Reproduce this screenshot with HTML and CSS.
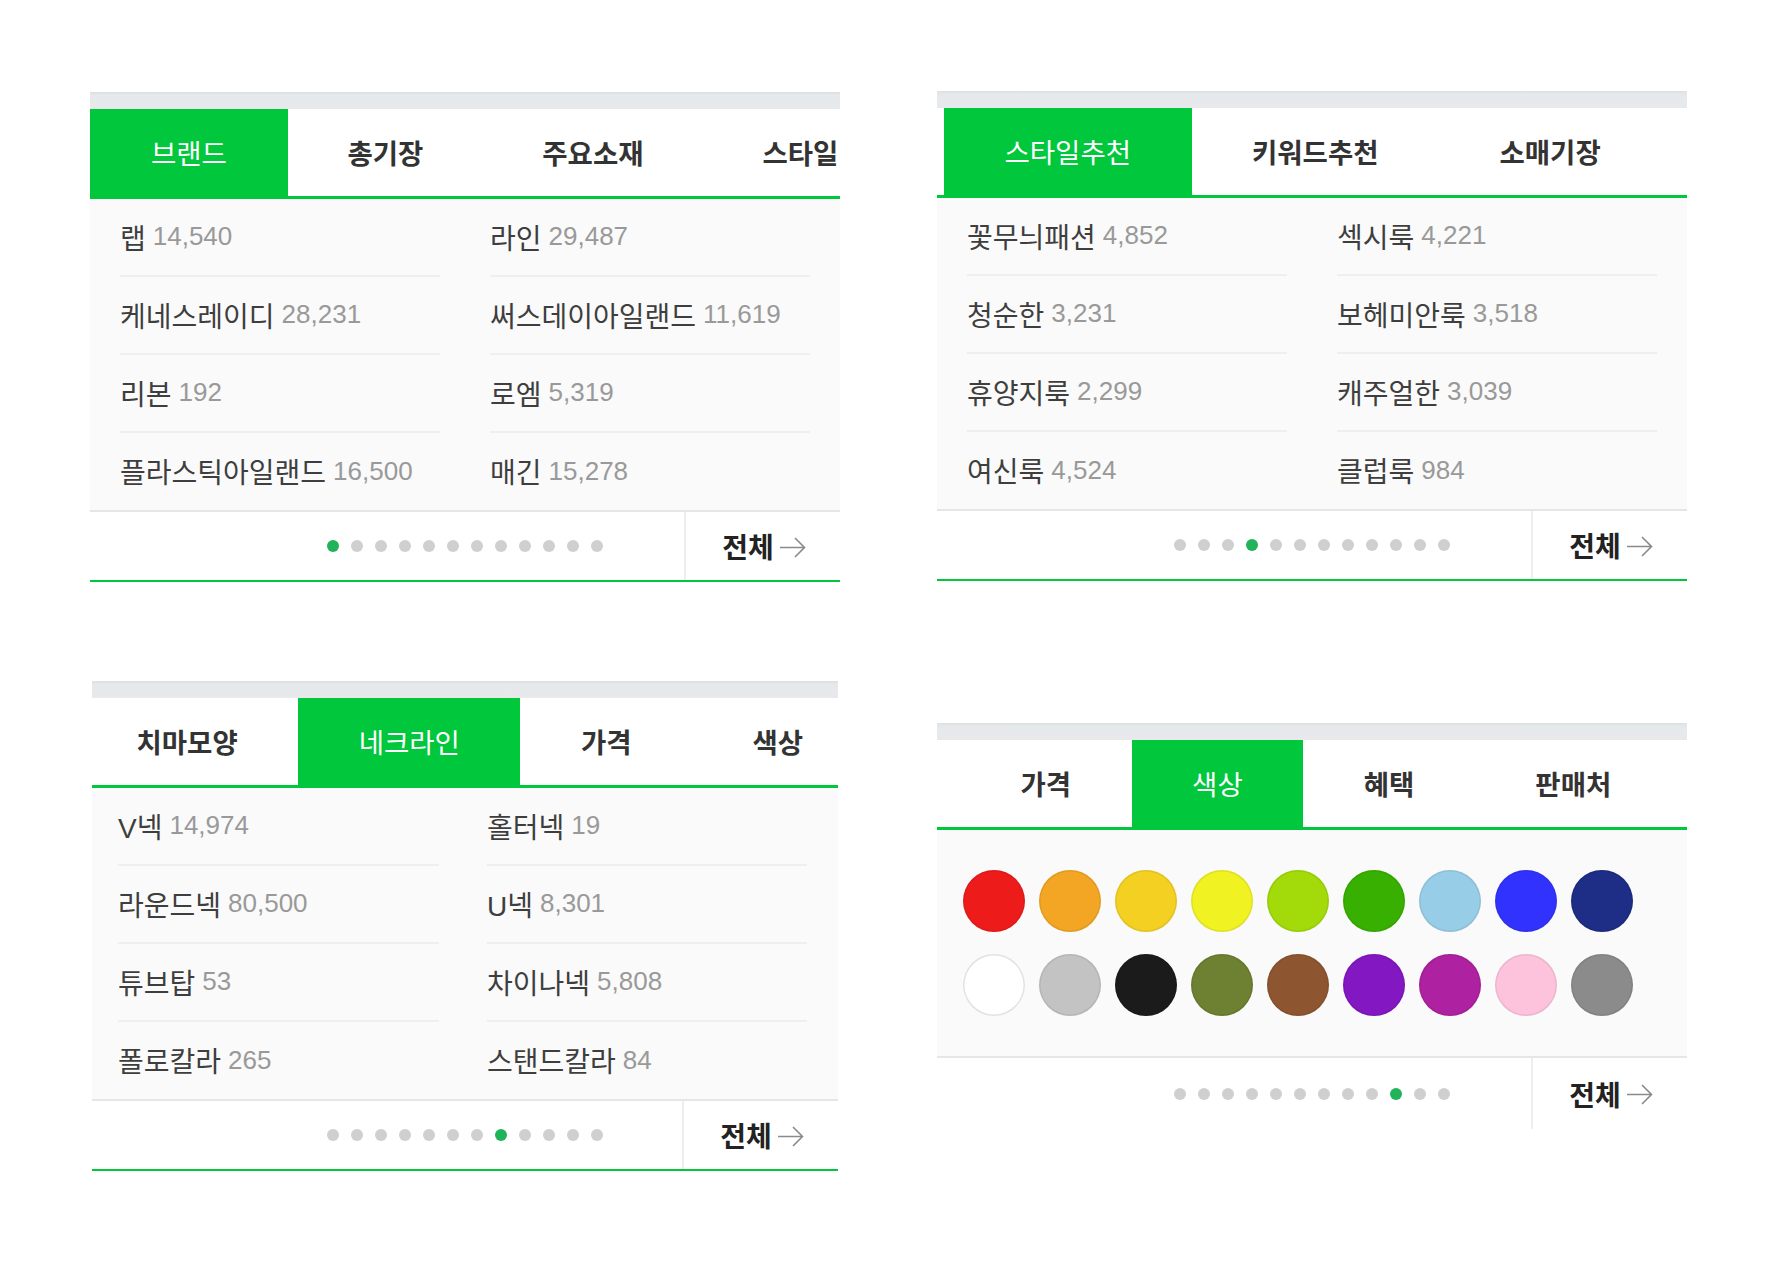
FILE: index.html
```html
<!DOCTYPE html>
<html lang="ko">
<head>
<meta charset="utf-8">
<title>Filter tabs</title>
<link rel="stylesheet" href="styles.css">
</head>
<body>
<main class="canvas">

  <section class="panel p1">
    <div class="topbar"></div>
    <nav class="tabs"><div class="track">
      <a class="tab active">브랜드</a><a class="tab">총기장</a><a class="tab">주요소재</a><a class="tab">스타일</a>
    </div></nav>
    <ul class="list">
      <li><span class="name">랩</span> <span class="num">14,540</span></li>
      <li><span class="name">라인</span> <span class="num">29,487</span></li>
      <li><span class="name">케네스레이디</span> <span class="num">28,231</span></li>
      <li><span class="name">써스데이아일랜드</span> <span class="num">11,619</span></li>
      <li><span class="name">리본</span> <span class="num">192</span></li>
      <li><span class="name">로엠</span> <span class="num">5,319</span></li>
      <li><span class="name">플라스틱아일랜드</span> <span class="num">16,500</span></li>
      <li><span class="name">매긴</span> <span class="num">15,278</span></li>
    </ul>
    <footer class="pager">
      <span class="spacer"></span>
      <div class="dots"><i class="on"></i><i></i><i></i><i></i><i></i><i></i><i></i><i></i><i></i><i></i><i></i><i></i></div>
      <a class="all">전체<svg width="27" height="21" viewBox="0 0 27 21"><path d="M1 10.5H25.5M16 1L25.5 10.5L16 20" fill="none" stroke="#8a8a8a" stroke-width="1.6"/></svg></a>
    </footer>
  </section>

  <section class="panel p2">
    <div class="topbar"></div>
    <nav class="tabs"><div class="track">
      <a class="tab active">스타일추천</a><a class="tab">키워드추천</a><a class="tab">소매기장</a>
    </div></nav>
    <ul class="list">
      <li><span class="name">꽃무늬패션</span> <span class="num">4,852</span></li>
      <li><span class="name">섹시룩</span> <span class="num">4,221</span></li>
      <li><span class="name">청순한</span> <span class="num">3,231</span></li>
      <li><span class="name">보헤미안룩</span> <span class="num">3,518</span></li>
      <li><span class="name">휴양지룩</span> <span class="num">2,299</span></li>
      <li><span class="name">캐주얼한</span> <span class="num">3,039</span></li>
      <li><span class="name">여신룩</span> <span class="num">4,524</span></li>
      <li><span class="name">클럽룩</span> <span class="num">984</span></li>
    </ul>
    <footer class="pager">
      <span class="spacer"></span>
      <div class="dots"><i></i><i></i><i></i><i class="on"></i><i></i><i></i><i></i><i></i><i></i><i></i><i></i><i></i></div>
      <a class="all">전체<svg width="27" height="21" viewBox="0 0 27 21"><path d="M1 10.5H25.5M16 1L25.5 10.5L16 20" fill="none" stroke="#8a8a8a" stroke-width="1.6"/></svg></a>
    </footer>
  </section>

  <section class="panel p3">
    <div class="topbar"></div>
    <nav class="tabs"><div class="track">
      <a class="tab">치마모양</a><a class="tab active">네크라인</a><a class="tab">가격</a><a class="tab">색상</a>
    </div></nav>
    <ul class="list">
      <li><span class="name">V넥</span> <span class="num">14,974</span></li>
      <li><span class="name">홀터넥</span> <span class="num">19</span></li>
      <li><span class="name">라운드넥</span> <span class="num">80,500</span></li>
      <li><span class="name">U넥</span> <span class="num">8,301</span></li>
      <li><span class="name">튜브탑</span> <span class="num">53</span></li>
      <li><span class="name">차이나넥</span> <span class="num">5,808</span></li>
      <li><span class="name">폴로칼라</span> <span class="num">265</span></li>
      <li><span class="name">스탠드칼라</span> <span class="num">84</span></li>
    </ul>
    <footer class="pager">
      <span class="spacer"></span>
      <div class="dots"><i></i><i></i><i></i><i></i><i></i><i></i><i></i><i class="on"></i><i></i><i></i><i></i><i></i></div>
      <a class="all">전체<svg width="27" height="21" viewBox="0 0 27 21"><path d="M1 10.5H25.5M16 1L25.5 10.5L16 20" fill="none" stroke="#8a8a8a" stroke-width="1.6"/></svg></a>
    </footer>
  </section>

  <section class="panel p4">
    <div class="topbar"></div>
    <nav class="tabs"><div class="track">
      <a class="tab">가격</a><a class="tab active">색상</a><a class="tab">혜택</a><a class="tab">판매처</a>
    </div></nav>
    <div class="colors">
      <span class="sw red"></span><span class="sw orange"></span><span class="sw gold"></span><span class="sw yellow"></span><span class="sw lime"></span><span class="sw green"></span><span class="sw sky"></span><span class="sw blue"></span><span class="sw navy"></span>
      <span class="sw white"></span><span class="sw silver"></span><span class="sw black"></span><span class="sw olive"></span><span class="sw brown"></span><span class="sw purple"></span><span class="sw magenta"></span><span class="sw pink"></span><span class="sw gray"></span>
    </div>
    <footer class="pager">
      <span class="spacer"></span>
      <div class="dots"><i></i><i></i><i></i><i></i><i></i><i></i><i></i><i></i><i></i><i class="on"></i><i></i><i></i></div>
      <a class="all">전체<svg width="27" height="21" viewBox="0 0 27 21"><path d="M1 10.5H25.5M16 1L25.5 10.5L16 20" fill="none" stroke="#8a8a8a" stroke-width="1.6"/></svg></a>
    </footer>
  </section>

</main>
</body>
</html>
```

FILE: styles.css
```css
* { box-sizing: border-box; }

html, body {
  margin: 0;
  padding: 0;
  background: #fff;
}

body {
  font-family: "Liberation Sans", "Noto Sans CJK KR", sans-serif;
  color: #333;
}

.canvas {
  display: grid;
  grid-template-columns: 750px 750px;
  column-gap: 97px;
  row-gap: 99px;
  align-items: start;
  padding: 92px 0 0 90px;
}

.panel {
  width: 750px;
  background: #fff;
}

.p2 { margin-top: -1px; }
.p3 { width: 746px; margin-left: 2px; }
.p4 { margin-top: 42px; }

.topbar {
  height: 17px;
  background: linear-gradient(#dcdfe2, #e6e9ec 3px, #e7e9eb);
}

.tabs {
  height: 90px;
  border-bottom: 3px solid #00c73c;
  overflow: hidden;
  background: #fff;
}

.track {
  display: flex;
  height: 100%;
  white-space: nowrap;
}

.p2 .track { margin-left: 7px; }
.p3 .track { margin-left: -16px; }
.p4 .track { margin-left: 23px; }

.tab {
  flex: none;
  display: flex;
  align-items: center;
  padding: 0 60.5px 2px;
  font-size: 27.5px;
  font-weight: 700;
  color: #333;
}

.p1 .tab { padding-left: 59.5px; padding-right: 59.5px; }
.p1 .tab:first-child { padding-left: 61px; padding-right: 61px; }

.tab.active {
  background: #00c73c;
  color: #fff;
  font-weight: 400;
}

.list {
  list-style: none;
  margin: 0;
  padding: 0 30px;
  background: #fafafa;
  display: grid;
  grid-template-columns: 320px 320px;
  column-gap: 50px;
  border-bottom: 2px solid #e6e6e6;
}

.p3 .list {
  padding: 0 26px;
  grid-template-columns: 321px 320px;
  column-gap: 48px;
}

.list li {
  height: 78px;
  display: flex;
  align-items: center;
  gap: 7px;
  padding-bottom: 1px;
  border-bottom: 2px solid #efefef;
  white-space: nowrap;
}

.list li:nth-last-child(-n+2) {
  border-bottom: 0;
  height: 77px;
}

.name { color: #3e3e3e; font-size: 28px; }
.num { color: #999; font-size: 26px; }

.pager {
  height: 70px;
  display: grid;
  grid-template-columns: 156px 1fr 156px;
  align-items: stretch;
  border-bottom: 2px solid #00c73c;
}

.p4 .pager { border-bottom: 0; height: 71px; }

.dots {
  display: flex;
  justify-content: center;
  align-items: center;
  gap: 12px;
}

.dots i {
  width: 12px;
  height: 12px;
  border-radius: 50%;
  background: #cfcfcf;
}

.dots i.on { background: #20b35a; }

.all {
  display: flex;
  align-items: center;
  justify-content: center;
  gap: 5px;
  border-left: 2px solid #eeeeee;
  font-size: 28px;
  font-weight: 700;
  color: #222;
  padding-left: 2px;
}

.all svg { display: block; margin-top: 2px; }

.colors {
  background: #fafafa;
  padding: 40px 26px;
  display: grid;
  grid-template-columns: repeat(9, 62px);
  column-gap: 14px;
  row-gap: 22px;
  border-bottom: 2px solid #e6e6e6;
}

.sw {
  width: 62px;
  height: 62px;
  border-radius: 50%;
  box-shadow: inset 0 0 0 1.5px rgba(0, 0, 0, 0.07);
}

.red { background: #ee1b1b; }
.orange { background: #f2a624; }
.gold { background: #f4d023; }
.yellow { background: #f0f222; }
.lime { background: #a3da09; }
.green { background: #38b001; }
.sky { background: #98cde7; }
.blue { background: #3232ff; }
.navy { background: #1e2d85; }
.white { background: #fff; box-shadow: inset 0 0 0 1.5px #e2e2e2; }
.silver { background: #c3c3c3; }
.black { background: #1b1b1b; }
.olive { background: #6e8031; }
.brown { background: #8e5630; }
.purple { background: #8317c1; }
.magenta { background: #ae21a1; }
.pink { background: #fdc3dc; }
.gray { background: #8b8b8b; }
```
